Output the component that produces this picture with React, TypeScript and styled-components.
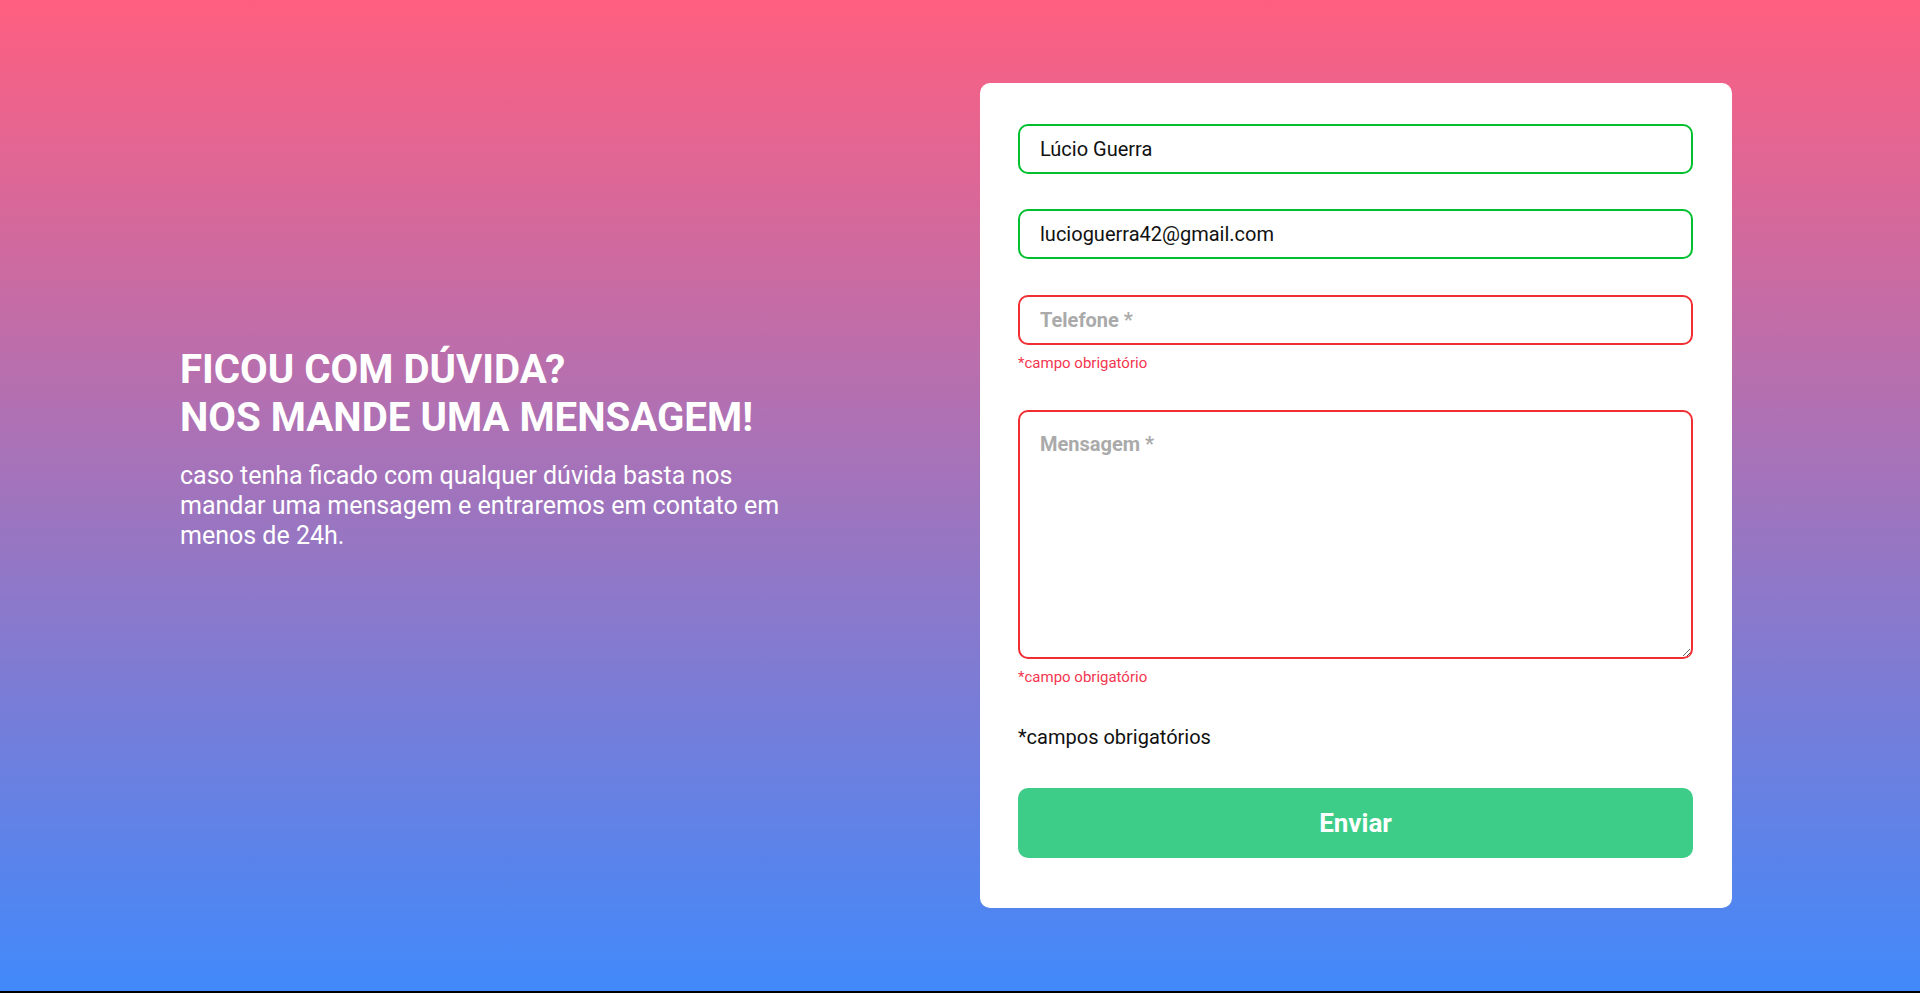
import React from "react";
import styled, { createGlobalStyle } from "styled-components";

const GlobalStyle = createGlobalStyle`
  * { box-sizing: border-box; }
  html, body { margin: 0; padding: 0; }
  body {
    background: #000;
    font-family: Roboto, "Noto Sans", Arial, sans-serif;
  }
`;

const Page = styled.main`
  height: calc(100vh - 2px);
  min-height: 991px;
  background: linear-gradient(180deg, #ff5f80 0%, #a074bd 50%, #4189fb 100%);
  display: flex;
  align-items: flex-start;
  justify-content: space-between;
  padding: 0 188px 0 180px;
`;

const Intro = styled.section`
  width: 620px;
  margin-top: 346px;
  color: #fff;
`;

const Title = styled.h1`
  margin: 0;
  font-size: 40.2px;
  line-height: 48px;
  font-weight: 700;
  text-transform: uppercase;
`;

const Lead = styled.p`
  margin: 19px 0 0;
  font-size: 25px;
  line-height: 30px;
  font-weight: 400;
`;

const Card = styled.form`
  width: 752px;
  margin-top: 83px;
  background: #fff;
  border-radius: 10px;
  padding: 41px 39px 50px 38px;
  display: flex;
  flex-direction: column;
`;

const Field = styled.div<{ $space: number }>`
  display: flex;
  flex-direction: column;
  margin-bottom: ${(p) => p.$space}px;
`;

const fieldBase = `
  width: 100%;
  border-width: 2px;
  border-style: solid;
  border-radius: 10px;
  background: #fff;
  font-family: Roboto, "Noto Sans", Arial, sans-serif;
  font-size: 20px;
  color: #111;
  outline: none;
  &::placeholder {
    color: #aaa;
    font-weight: 700;
    opacity: 1;
  }
`;

const TextInput = styled.input<{ $valid: boolean }>`
  ${fieldBase}
  height: 50px;
  padding: 0 20px;
  border-color: ${(p) => (p.$valid ? "#00c030" : "#f02e34")};
`;

const TextArea = styled.textarea<{ $valid: boolean }>`
  ${fieldBase}
  height: 249px;
  padding: 21px 20px;
  resize: vertical;
  line-height: 23px;
  border-color: ${(p) => (p.$valid ? "#00c030" : "#f02e34")};
`;

const ErrorText = styled.span`
  margin-top: 9px;
  font-size: 15px;
  line-height: 18px;
  color: #f3364f;
`;

const Note = styled.p`
  margin: 39px 0 39px;
  font-size: 20px;
  line-height: 24px;
  color: #111;
`;

const Submit = styled.button`
  height: 70px;
  width: 100%;
  border: none;
  border-radius: 10px;
  background: #3ecd88;
  color: #fff;
  font-family: Roboto, "Noto Sans", Arial, sans-serif;
  font-size: 26px;
  font-weight: 700;
  cursor: pointer;
`;

export default function App() {
  return (
    <>
      <GlobalStyle />
      <Page>
        <Intro>
          <Title>
            Ficou com dúvida?
            <br />
            Nos mande uma mensagem!
          </Title>
          <Lead>
            caso tenha ficado com qualquer dúvida basta nos mandar uma mensagem e
            entraremos em contato em menos de 24h.
          </Lead>
        </Intro>
        <Card onSubmit={(e) => e.preventDefault()}>
          <Field $space={35}>
            <TextInput $valid defaultValue="Lúcio Guerra" placeholder="Nome *" />
          </Field>
          <Field $space={36}>
            <TextInput
              $valid
              defaultValue="lucioguerra42@gmail.com"
              placeholder="E-mail *"
            />
          </Field>
          <Field $space={38}>
            <TextInput $valid={false} placeholder="Telefone *" />
            <ErrorText>*campo obrigatório</ErrorText>
          </Field>
          <Field $space={0}>
            <TextArea $valid={false} placeholder="Mensagem *" />
            <ErrorText>*campo obrigatório</ErrorText>
          </Field>
          <Note>*campos obrigatórios</Note>
          <Submit type="submit">Enviar</Submit>
        </Card>
      </Page>
    </>
  );
}
